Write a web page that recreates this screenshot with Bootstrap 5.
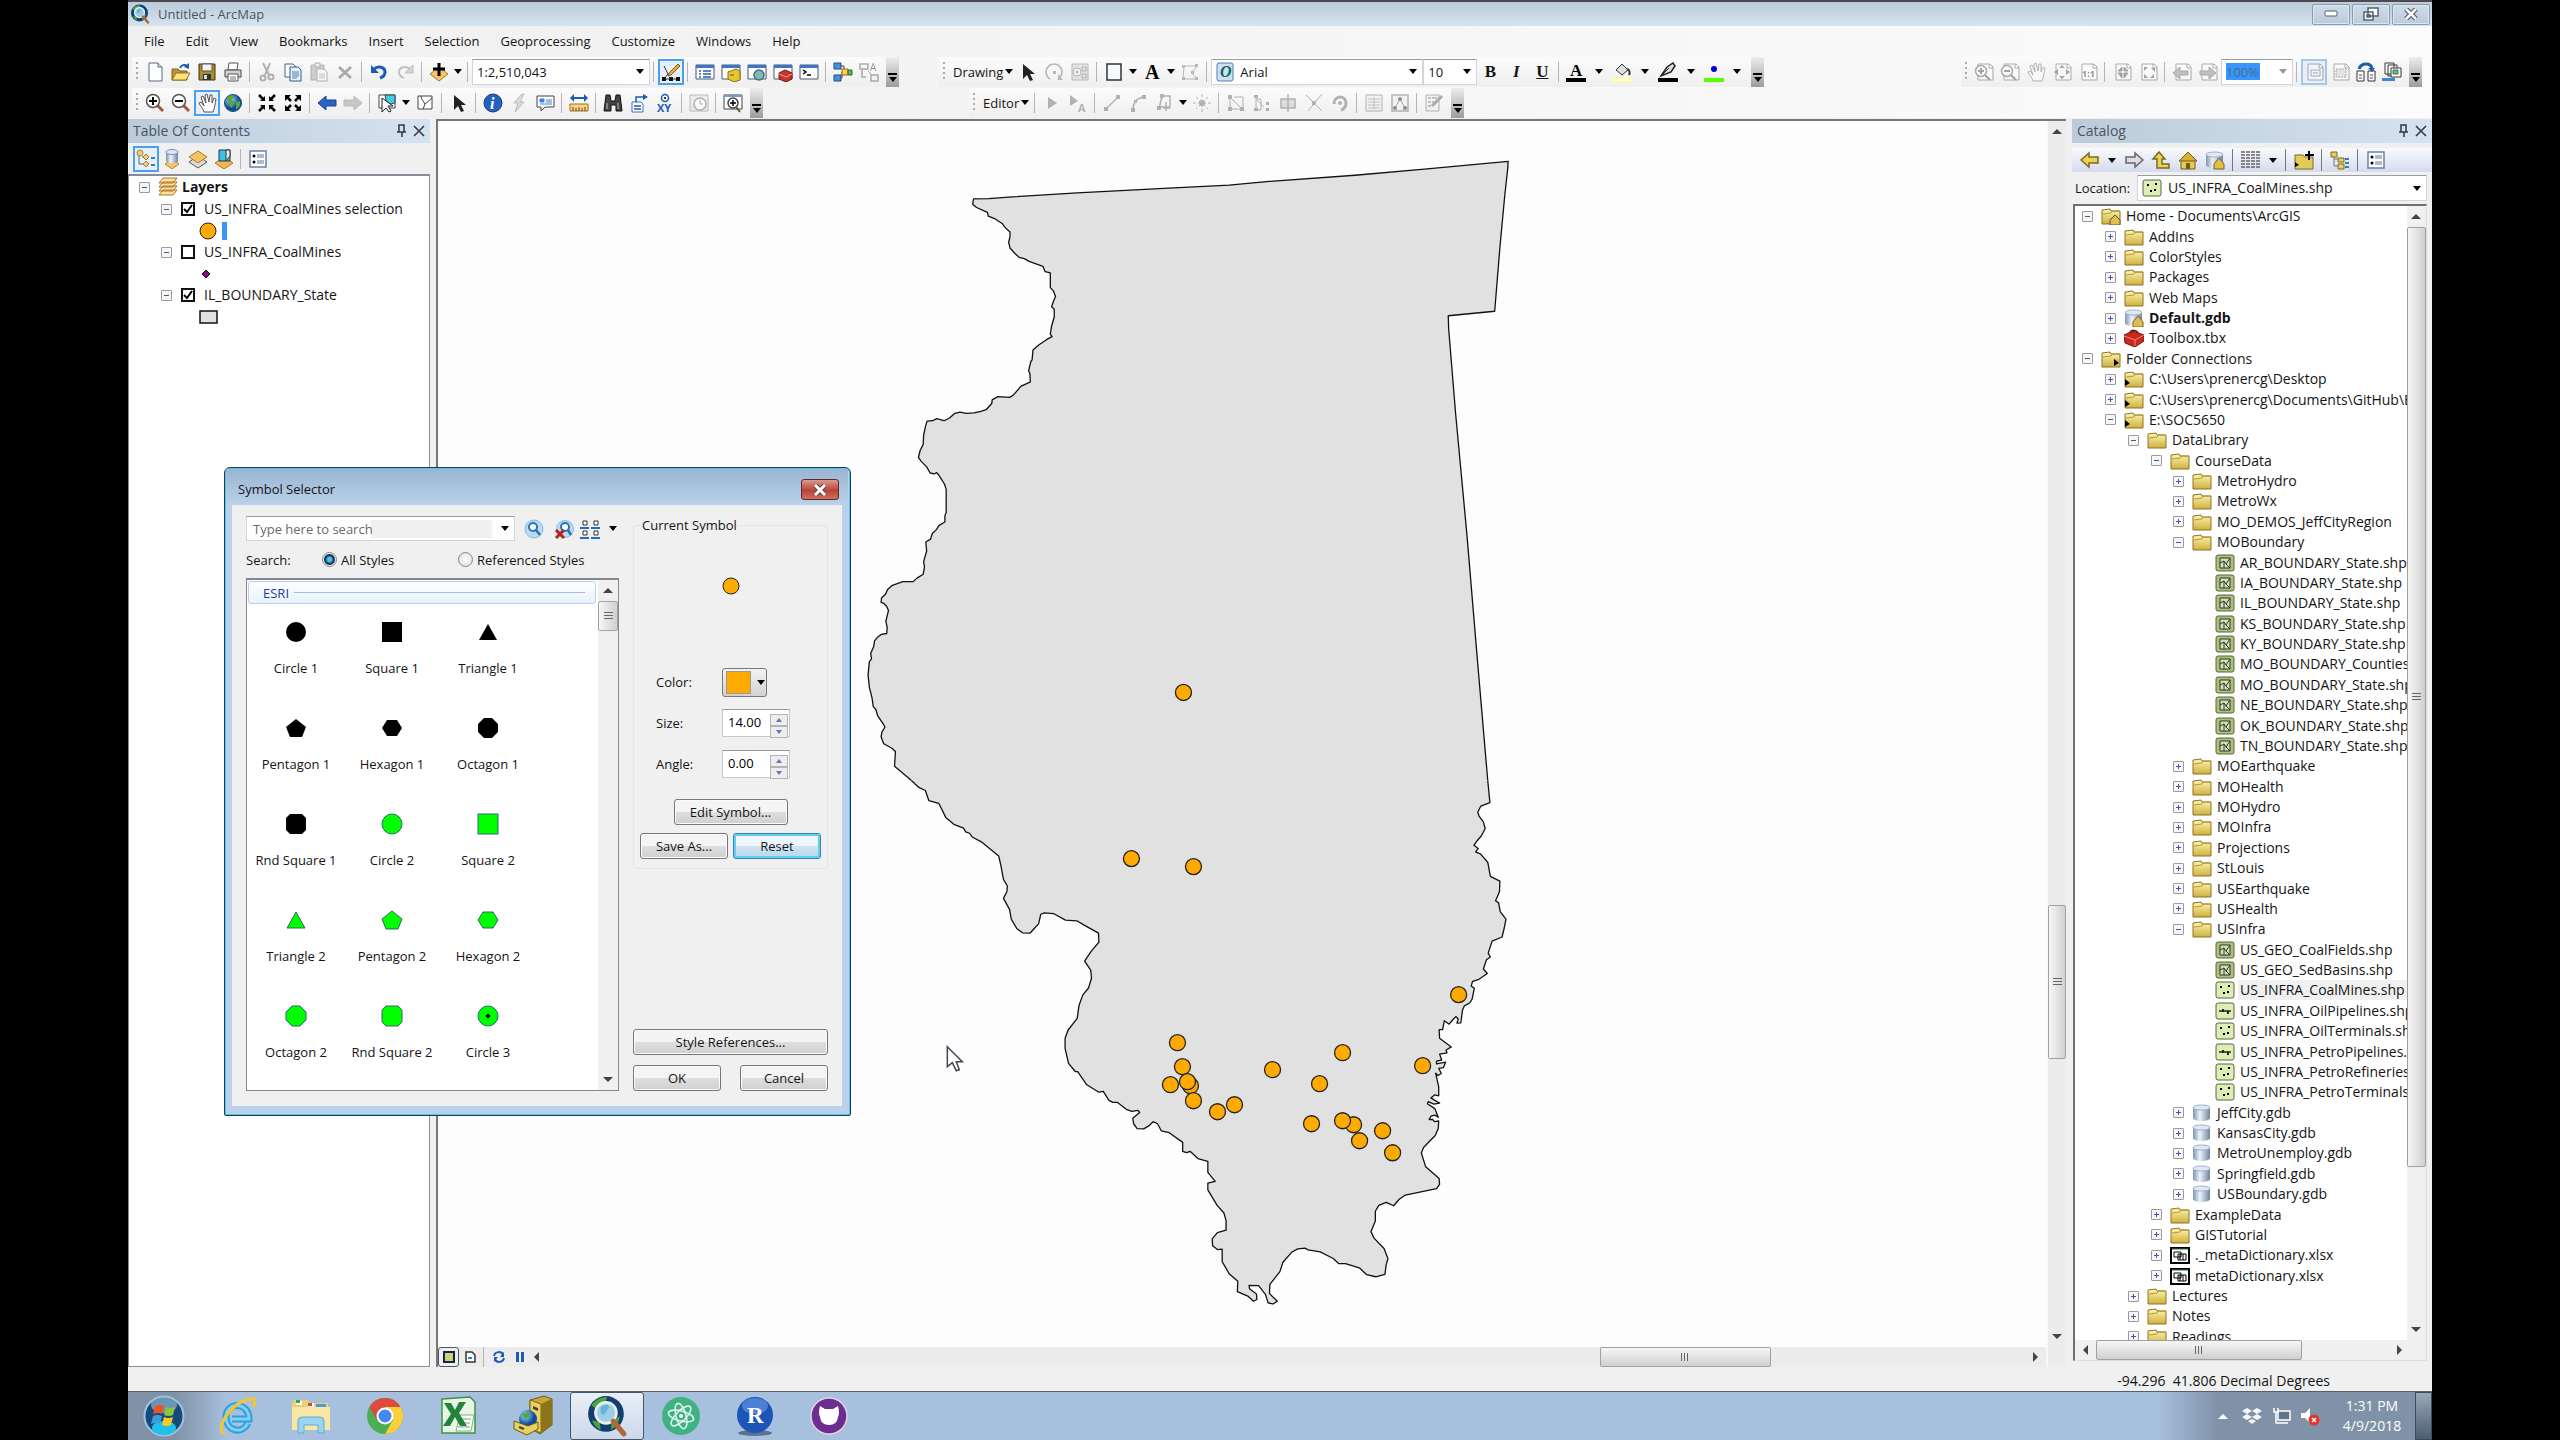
<!DOCTYPE html>
<html lang="en">
<head>
<meta charset="utf-8">
<meta name="viewport" content="width=device-width, initial-scale=1">
<title>Untitled - ArcMap</title>
<link href="https://cdn.jsdelivr.net/npm/bootstrap@5.3.0/dist/css/bootstrap.min.css" rel="stylesheet">
<style>
body{background:#000;font-family:"Open Sans","Noto Sans",sans-serif;font-size:13px;line-height:20px;color:#141414}
button{font:inherit;color:inherit;padding:0;border:0;background:none}
svg{display:block;flex:none}
.desk{height:100vh;margin:0 5vw;background:#f0f0f0;border-top:2px solid #4c4a50}
.titlebar{height:24px;background:linear-gradient(#bccad9,#d6e4f1);padding-left:2px;color:#4c545e}
.titlebar svg{width:20px;height:20px}
.titlebar .wbtns{gap:2px;padding-right:2px}
.wbtn{width:38px;height:21px;border:1px solid #8b9bb0;border-radius:2px;background:linear-gradient(#cddae8,#bccbdc);display:grid;place-items:center;box-shadow:inset 0 0 0 1px #dce6f1}
.titlebar .wbtn svg{width:auto;height:auto}
.menus{height:30px;padding:0 16px;gap:21px;background:linear-gradient(90deg,#f0f0f0,#fbfbfb)}
.menus a{color:#141414;text-decoration:none}
.toolrow{height:31px;background:linear-gradient(90deg,#f0f0f0,#fbfbfb)}
.tbar{height:30px;background:linear-gradient(#fbfbfb,#efefef);padding-left:4px}
.tbar::before{content:"";width:2px;height:20px;margin-right:4px;background:repeating-linear-gradient(#aaa 0 2px,transparent 2px 5px)}
.tools{display:contents}
.tool{width:26px;height:26px;display:grid;place-items:center;flex:none}
.tool svg,.ico{width:20px;height:20px}
.tool.on{border:2px solid #4b9ff0;background:#e6effa}
.tool.off svg{filter:grayscale(1);opacity:.42}
.tool.off.on{border-color:#aac6e4}
.vsep{width:1px;height:20px;margin:0 4px 0 3px;background:#b4b4b4;flex:none}
.arr{width:12px;height:24px;display:grid;place-items:center;flex:none}
.arr.wide{width:20px}
.arr::after,.pick::after{content:"";border:4px solid transparent;border-top:5px solid #000;border-bottom:0}
.more{width:13px;height:30px;margin-left:4px;background:linear-gradient(#ededed,#9c9c9c);display:grid;place-items:end center;padding-bottom:5px}
.more::before{content:"";border:4px solid transparent;border-top:5px solid #000;border-bottom:0;grid-area:1/1}
.more::after{content:"";width:9px;height:9px;background:linear-gradient(#000 0 2px,transparent 2px);grid-area:1/1}
.pick{position:relative;display:flex;align-items:center;background:#fff;border:1px solid #d2d4dc;border-top-color:#9a9ca4}
.pick::after{position:absolute;right:5px;pointer-events:none}
.pick select,.pick input{appearance:none;border:0;background:transparent;width:100%;height:24px;padding:0 0 0 4px;outline:0;font:inherit;color:inherit}
.w-scale{width:178px}.w-font{width:212px}.w-size{width:54px}.w-zoom{width:72px}
.pick.w-zoom select{color:#4a6a90;background:linear-gradient(#3796fb,#3796fb) 4px 3px/34px 17px no-repeat;opacity:1}
.w-zoom::after{border-top-color:#999}
.glyph{font-family:"Liberation Serif",serif;font-weight:700;font-size:17px}
.gap-draw{margin-left:40px}.gap-edit{margin-left:206px}.gap-end{margin-right:10px}
.dockhead{height:24px;background:linear-gradient(90deg,#bccbdb,#d5e3f0);color:#4c545e;font-size:14px;padding:0 4px 0 5px}
.toc{width:302px}
.toctools{height:31px;padding-left:5px}
.tocbox{background:#fff;border:1px solid #868c98;border-top-width:2px}
.tocbox ul,.ctree{list-style:none;margin:0;padding:0;font-size:14px}
.root{height:22px;padding-left:10px}
.lname{height:22px;padding-left:32px}
.lsym{height:21px;padding-left:70px}
.exp{width:11px;height:11px;border:1px solid #9a9a9a;border-radius:1px;background:linear-gradient(90deg,#3c5aa8,#3c5aa8) center/5px 1px no-repeat,#f6f6f6;flex:none}
.exp.plus{background:linear-gradient(#3c5aa8,#3c5aa8) center/5px 1px no-repeat,linear-gradient(#3c5aa8,#3c5aa8) center/1px 5px no-repeat,#f6f6f6}
.tick{appearance:none;width:14px;height:14px;margin:0 9px;border:2px solid #111;background:#fff;flex:none}
.tick:checked{background:#fff url("data:image/svg+xml,%3Csvg xmlns='http://www.w3.org/2000/svg' viewBox='0 0 10 10'%3E%3Cpath d='M1 5l3 3 5-7' fill='none' stroke='%23000' stroke-width='2'/%3E%3C/svg%3E") center/10px no-repeat}
.split{width:6px}
.mapwrap{border-left:2px solid #777;border-top:2px solid #777;min-width:0}
.mapcanvas{background:#fdfdfd;min-height:0}
.mapcanvas svg{width:100%;height:100%}
.vbar{width:20px;background:#ececec;border-left:2px solid #f8f8f8;padding:8px 0 28px}
.vtrack{padding-bottom:275px}
.thumb{border:1px solid #a0a0a0;border-radius:2px;background:linear-gradient(90deg,#f6f6f6,#cfd0d2)}
.thumb.h{background:linear-gradient(#f6f6f6,#cfd0d2)}
.vtrack .thumb{height:154px}
.htrack{padding-right:262px}
.htrack .thumb{width:171px}
.lines{width:9px;height:8px;background:repeating-linear-gradient(#666 0 1px,transparent 1px 3px)}
.lines.h{background:repeating-linear-gradient(90deg,#666 0 1px,transparent 1px 3px)}
.tri{width:0;height:0;border:5px solid transparent;flex:none}
.tri.u{border-top:0;border-bottom-color:#444}.tri.d{border-bottom:0;border-top-color:#444}
.tri.l{border-left:0;border-right-color:#444}.tri.r{border-right:0;border-left-color:#444}
.mapfoot{height:20px;background:#ececec;padding-right:8px}
.mapfoot .tool{width:21px;height:20px}.mapfoot .tool svg{width:12px;height:12px}
.mapfoot .tool.on{border:1px solid #555;border-radius:3px}
.catalog{width:360px}
.cattools{height:24px;margin:5px 0 3px;padding-left:4px;background:linear-gradient(#fbfbfe,#d3dbee)}
.cattools .tool{width:27px;height:24px}.cattools .arr{width:17px}.cattools .vsep{margin:0 4px;height:22px;background:#777}
.locrow{height:26px;margin-bottom:3px;padding:0 5px 0 3px}
.locrow .pick{width:290px}
.locrow .pick select{padding-left:6px;font-size:14px}
.catbox{margin:0 5px 6px 1px;border:2px solid #707070;border-right:1px solid #ddd;border-bottom:1px solid #ddd;background:#fff}
.treeview{overflow:hidden;min-width:0}
.ctree{height:calc(100% + 7px);display:flex;flex-direction:column;padding-left:7px}
.ctree li{flex:1 1 0;min-height:0;display:flex;align-items:center;white-space:nowrap}
.ctree svg{width:20px;height:18px;margin:0 3px 0 8px}
.ctree .leaf{margin-left:11px}
.ctree a{color:#141414;text-decoration:none;padding:0 2px;line-height:20px}
.ctree a.cur{background:#f0f0f0}
.ctree .l1{padding-left:23px}.ctree .l2{padding-left:46px}.ctree .l3{padding-left:69px}.ctree .l4{padding-left:91px}.ctree .l5{padding-left:114px}
.catv{width:20px;background:#f0f0f0}
.cath{height:20px;background:#f0f0f0;padding:0 24px 0 8px}
.cath .thumb{width:206px}
.statusbar{height:24px;padding:3px 102px 0 0;font-size:14px}
.taskbar{height:49px;border-top:1px solid #51606f;background:linear-gradient(90deg,#8092a8 0,#8092a8 48px,#a6c0dd 98px,#a6c0dd 2030px,#8092a8 2090px,#8092a8)}
.tapp{width:74px;height:48px;display:grid;place-items:center}
.tapp:first-child{width:72px}
.tapp svg{width:42px;height:42px}
.tapp.live{border:1px solid #45566c;border-radius:3px;background:linear-gradient(#e9eff7,#ccd9ea)}
.tray{gap:9px}
.clock{color:#fff;font-size:14px;text-align:center;width:78px;margin-right:4px}
.showdesk{width:17px;height:48px;border:1px solid #3e4b5c;background:linear-gradient(#9aa7b6,#4c5d73)}
.tray svg{width:20px;height:20px}
/* floating dialog */
.symdlg{position:absolute;left:96px;top:465px;width:627px;border:1px solid #1d3c56;border-radius:6px 6px 2px 2px;background:#b9d1ea;box-shadow:inset 0 0 0 1px #56c4e4;padding:0 8px 9px 7px}
.symdlg header{height:36px;background:linear-gradient(#9ab5d2,#b9d1ea);margin:1px -6px 0;padding:10px 9px 0 12px}
.xbtn{width:38px;height:21px;border:1px solid #5c2a2a;border-radius:3px;background:linear-gradient(#d99a92,#c14a3c 50%,#b4402f 51%,#d07060);display:grid;place-items:center}
.dlgbody{background:#f0f0f0;padding:11px 13px 15px 14px;gap:14px}
.dleft{width:373px}
.searchrow{height:25px}
.searchrow .pick{width:274px;height:25px;margin-right:6px}
.searchrow .pick input{margin:0 22px 0 2px;height:18px;background:linear-gradient(90deg,#fff 122px,#f0f0f0 122px)}
.searchrow input::placeholder{color:#6a6a6a;opacity:1}
.radios{height:37px}
.radios span{width:76px}
.radios label{width:136px}
.rad{appearance:none;width:15px;height:15px;border:1px solid #8a8a8a;border-radius:50%;background:radial-gradient(#fff,#d8d8d8);margin:0 4px 0 0;flex:none}
.rad:checked{background:radial-gradient(circle,#56c0ea 0 2px,#12405e 4px 5px,#f4f4f4 6px)}
.symlist{height:513px;border:2px solid #828790;border-width:2px 1px 1px 1px;background:#fff}
.esri{height:23px;margin:1px;border:1px solid #b4d0f0;border-radius:3px;background:linear-gradient(#fff,#e8f1fc);color:#1e3c9a;padding:0 10px 0 14px;width:348px}
.esri::after{content:"";height:1px;flex:1;margin-left:5px;background:#a9bbdf}
.symgrid{display:grid;grid-template-columns:repeat(3,96px);grid-auto-rows:96px;padding-left:1px}
.symgrid button{display:flex;flex-direction:column;align-items:center;padding-top:12px;white-space:nowrap}
.symgrid svg{width:30px;height:30px;margin-bottom:11px}
.symlist .thumb{height:30px}
.dright{width:195px}
.grp{border:1px solid #dce6ee;border-radius:3px;height:353px;margin-top:0;padding:0 6px}
.grp legend{float:none;width:auto;font-size:13px;line-height:18px;margin:0;padding:0 2px}
.preview{height:104px;margin-bottom:30px}
.frow{padding-left:16px;margin-bottom:13px;height:28px}
.frow label{width:66px}
.colorbtn{width:45px;height:29px;border:1px solid #777;border-radius:3px;background:linear-gradient(#f4f4f4,#d2d2d2);display:flex;align-items:center;padding-left:3px}
.colorbtn i{width:25px;height:23px;background:#ffaa00;border:1px solid #999}
.colorbtn b{border:4px solid transparent;border-top:5px solid #000;border-bottom:0;margin-left:6px}
.spin{width:68px;height:28px;border:1px solid #c8c8c8;border-top-color:#999;background:#fff}
.spin input{border:0;width:47px;height:24px;padding:0 0 0 5px;font:inherit;outline:0}
.spin button{width:18px;height:12px;border:1px solid #b4b4b4;background:#eee;display:grid;place-items:center}
.spin .tri{border-width:3px}.spin .tri.u{border-top:0;border-bottom:4px solid #6078b4}.spin .tri.d{border-bottom:0;border-top:4px solid #6078b4}
.wb{height:26px;border:1px solid #777;border-radius:3px;background:linear-gradient(#f4f4f4 50%,#dedede 51%,#d0d0d0);box-shadow:inset 0 0 0 1px #fafafa}
.wb.hot{border-color:#3c7fb1;box-shadow:inset 0 0 0 2px #5fd0f5;background:linear-gradient(#eef6fb 50%,#cfe4f2 51%,#b8d6ea)}
.w88{width:88px}.w114{width:114px}
.dfoot{gap:10px}
</style>
</head>
<body>
<!-- icon sprite -->
<svg width="0" height="0" class="position-absolute" aria-hidden="true"><defs>
<linearGradient id="gf" x2="0" y2="1"><stop stop-color="#fff6b0"/><stop offset="1" stop-color="#cfb03e"/></linearGradient>
<linearGradient id="gd"><stop stop-color="#7f93ad"/><stop offset=".4" stop-color="#eef4fb"/><stop offset="1" stop-color="#6e83a0"/></linearGradient>
<radialGradient id="gl" cx=".35" cy=".3"><stop stop-color="#9fe0ff"/><stop offset="1" stop-color="#0f4c9c"/></radialGradient>
<symbol id="new" viewBox="0 0 20 20"><path d="M4 1h9l4 4v14H4z" fill="#fff" stroke="#566a84"/><path d="M13 1v4h4" fill="#dde6f2" stroke="#566a84"/></symbol>
<symbol id="open" viewBox="0 0 20 20"><path d="M1 18V7h6l2 2h7v9z" fill="#b89430" stroke="#7c6420"/><path d="M1 18l4-7h14l-4 7z" fill="#ffe37a" stroke="#8d7328"/><path d="M9 6c1-3 5-4 7-2" fill="none" stroke="#1d5cae" stroke-width="2"/><path d="M18 1v6l-5-2z" fill="#1d5cae"/></symbol>
<symbol id="save" viewBox="0 0 20 20"><path d="M2 2h16v16H2z" fill="#a58c2c" stroke="#3b3415"/><path d="M5 2h10v7H5z" fill="#f4f4f4" stroke="#554"/><path d="M6 12h8v6H6z" fill="#333"/><path d="M7 13h3v4H7z" fill="#ddd"/></symbol>
<symbol id="print" viewBox="0 0 20 20"><path d="M6 1h9l-1 7H5z" fill="#fff" stroke="#555"/><path d="M2 8h16v7H2z" fill="#d0d3d8" stroke="#444"/><path d="M5 12h10v7H5z" fill="#fff" stroke="#555"/><path d="M7 15h6M7 17h6" stroke="#777"/></symbol>
<symbol id="cut" viewBox="0 0 20 20"><path d="M6 1l6 12M13 1L8 13" stroke="#555" stroke-width="2"/><circle cx="6" cy="16" r="2.5" fill="none" stroke="#555" stroke-width="2"/><circle cx="14" cy="15" r="2.5" fill="none" stroke="#555" stroke-width="2"/></symbol>
<symbol id="copy" viewBox="0 0 20 20"><path d="M2 2h8l3 3v10H2z" fill="#fff" stroke="#49637f"/><path d="M7 5h8l3 3v11H7z" fill="#eaf1fa" stroke="#2d5890"/><path d="M9 10h7M9 12h7M9 14h7M9 16h5" stroke="#4a79b5"/></symbol>
<symbol id="paste" viewBox="0 0 20 20"><path d="M2 3h13v15H2z" fill="#999" stroke="#555"/><path d="M6 1h5v4H6z" fill="#ddd" stroke="#555"/><path d="M8 7h7l3 3v9H8z" fill="#fff" stroke="#555"/><path d="M10 12h6M10 14h6M10 16h6" stroke="#777"/></symbol>
<symbol id="del" viewBox="0 0 20 20"><path d="M4 5l12 11M16 5L4 16" stroke="#444" stroke-width="3"/></symbol>
<symbol id="undo" viewBox="0 0 20 20"><path d="M4 8c5-5 12-3 12 2 0 3-2 5-5 6" fill="none" stroke="#1c5bb4" stroke-width="3"/><path d="M2 3v8h8z" fill="#1c5bb4"/></symbol>
<symbol id="redo" viewBox="0 0 20 20"><path d="M16 8c-5-5-12-3-12 2 0 3 2 5 5 6" fill="none" stroke="#777" stroke-width="2"/><path d="M18 3v8h-8z" fill="#aaa" stroke="#777"/></symbol>
<symbol id="add" viewBox="0 0 20 20"><path d="M10 5l9 7-9 7-9-7z" fill="#f3c663" stroke="#a37a25"/><path d="M10 1v13M4 7h12" stroke="#000" stroke-width="3"/></symbol>
<symbol id="edt" viewBox="0 0 20 20"><path d="M3 4l4 8-4 5h14" fill="none" stroke="#333"/><path d="M8 11L17 2l2 2-9 9-3 1z" fill="#f0a83c" stroke="#7c5a1e"/><path d="M1 15h4v4H1zM8 15h4v4H8zM15 15h4v4h-4z" fill="#111"/></symbol>
<symbol id="win" viewBox="0 0 20 20"><path d="M1 3h18v14H1z" fill="#fff" stroke="#47566a"/><path d="M1 3h18v3H1z" fill="#3f74c4"/></symbol>
<symbol id="toc" viewBox="0 0 20 20"><use href="#win"/><path d="M4 9h2M8 9h8M4 12h2M8 12h8M4 15h2M8 15h8" stroke="#2a62b2" stroke-width="1.5"/></symbol>
<symbol id="catw" viewBox="0 0 20 20"><use href="#win"/><path d="M7 10l8-3 4 2v9l-6 2-6-3z" fill="#e6c52e" stroke="#86701a"/><path d="M9 13h4" stroke="#554"/></symbol>
<symbol id="srch" viewBox="0 0 20 20"><use href="#win"/><circle cx="12" cy="13" r="5" fill="#86b7b0" stroke="#3c6f86" stroke-width="1.5"/></symbol>
<symbol id="tbx" viewBox="0 0 20 20"><use href="#win"/><path d="M6 11l6-3 7 3v6l-6 3-7-3z" fill="#c5352b" stroke="#6e1812"/><path d="M6 12l7 3 6-3" fill="none" stroke="#f4a29a"/></symbol>
<symbol id="py" viewBox="0 0 20 20"><use href="#win"/><path d="M4 8l3 2-3 2M8 13h4" fill="none" stroke="#000" stroke-width="1.5"/></symbol>
<symbol id="model" viewBox="0 0 20 20"><path d="M5 4h6v6h5M5 16h4v-6" fill="none" stroke="#444"/><path d="M1 1h7v6H1zM1 13h7v6H1z" fill="#4a90d9" stroke="#1c4c86"/><path d="M9 7h6v6H9z" fill="#ffd24a" stroke="#8d6d12"/><path d="M15 8h4v5h-4z" fill="#58b858" stroke="#2c6d2c"/></symbol>
<symbol id="ma" viewBox="0 0 20 20"><path d="M1 2h8v5H1zM3 7v8h4M12 13h7v6h-7z" fill="none" stroke="#444" stroke-width="1.5"/><text x="11" y="9" font-size="10">A</text><path d="M9 9l4 4" stroke="#444"/></symbol>
<symbol id="zin" viewBox="0 0 20 20"><path d="M12 12l6 6" stroke="#9c5a38" stroke-width="3"/><circle cx="8" cy="8" r="6.5" fill="#fff" stroke="#555" stroke-width="1.5"/><path d="M8 4v8M4 8h8" stroke="#000" stroke-width="2"/></symbol>
<symbol id="zout" viewBox="0 0 20 20"><path d="M12 12l6 6" stroke="#9c5a38" stroke-width="3"/><circle cx="8" cy="8" r="6.5" fill="#fff" stroke="#555" stroke-width="1.5"/><path d="M4 8h8" stroke="#000" stroke-width="2"/></symbol>
<symbol id="pan" viewBox="0 0 20 20"><path d="M7 19c-1-4-4-6-5-9l2-1 3 4L4 4l2-1 3 7-1-8 2-1 2 8 1-7h2v8l2-5 2 1c-1 5-1 8-3 13z" fill="#fff" stroke="#555"/></symbol>
<symbol id="globe" viewBox="0 0 20 20"><circle cx="10" cy="10" r="8.5" fill="url(#gl)" stroke="#1a4a7d"/><path d="M4 5c3-3 6-3 7-1l-2 3 2 3-2 5c-3-2-5-6-5-10zM13 9l4-1c1 4-1 7-4 8z" fill="#5aa73a"/></symbol>
<symbol id="fin" viewBox="0 0 20 20"><path d="M2 2l5 5M18 2l-5 5M2 18l5-5M18 18l-5-5" stroke="#000" stroke-width="2.5"/><path d="M8 3v5H3zM12 3v5h5zM8 17v-5H3zM12 17v-5h5z"/></symbol>
<symbol id="fout" viewBox="0 0 20 20"><path d="M3 3l5 5M17 3l-5 5M3 17l5-5M17 17l-5-5" stroke="#000" stroke-width="2.5"/><path d="M2 2h6L2 8zM18 2h-6l6 6zM2 18h6l-6-6zM18 18h-6l6-6z"/></symbol>
<symbol id="back" viewBox="0 0 20 20"><path d="M1 10l8-7v4h10v6H9v4z" fill="#2c64c4" stroke="#1b438c"/></symbol>
<symbol id="fwd" viewBox="0 0 20 20"><path d="M19 10l-8-7v4H1v6h10v4z" fill="#888" stroke="#666"/></symbol>
<symbol id="sel" viewBox="0 0 20 20"><path d="M2 2h16v13H2z" fill="#fff" stroke="#444"/><path d="M8 2h10v8l-8 2z" fill="#43cbe8" stroke="#444"/><path d="M5 5v14l4-4 3 4 2-1-3-5h5z" fill="#fff" stroke="#222"/></symbol>
<symbol id="clr" viewBox="0 0 20 20"><path d="M3 3h14v13H3z" fill="#fff" stroke="#444"/><path d="M6 3c0 4 3 5 4 8l-2 5M17 5l-7 6" fill="none" stroke="#444"/></symbol>
<symbol id="ptr" viewBox="0 0 20 20"><path d="M5 2v15l4-4 3 6 3-1-3-6h5z" fill="#222"/></symbol>
<symbol id="info" viewBox="0 0 20 20"><circle cx="10" cy="10" r="9" fill="#2460bd" stroke="#173d7c"/><text x="7" y="16" font-family="Liberation Serif" font-weight="700" font-style="italic" font-size="16" fill="#fff">i</text></symbol>
<symbol id="bolt" viewBox="0 0 20 20"><path d="M13 1L5 10h4l-3 9 9-10h-4l4-8z" fill="#bbb" stroke="#666"/></symbol>
<symbol id="html" viewBox="0 0 20 20"><path d="M2 3h17v11h-9l-4 4v-4H2z" fill="#fff" stroke="#444"/><path d="M5 6h4v3H5zM11 7h6M11 9h6M5 11h12" fill="#3a86d8" stroke="#3a86d8"/></symbol>
<symbol id="meas" viewBox="0 0 20 20"><path d="M1 5l4-4v3h10V1l4 4-4 4V6H5v3z" fill="#1c5bb4"/><path d="M1 11h18v7H1z" fill="#ffd27a" stroke="#9c7522"/><path d="M4 18v-4M7 18v-3M10 18v-4M13 18v-3M16 18v-4" stroke="#644"/></symbol>
<symbol id="find" viewBox="0 0 20 20"><path d="M3 2h4l1 6h4l1-6h4l2 16h-6v-6H8v6H1z" fill="#444" stroke="#111"/><path d="M4 10v6M15 10v6" stroke="#bbb"/></symbol>
<symbol id="route" viewBox="0 0 20 20"><path d="M3 9h9l2 2v8H3z" fill="#fff" stroke="#3a70b5"/><path d="M5 13h7M5 16h7M7 9V4h8" stroke="#1c5bb4" fill="none" stroke-width="1.5"/><path d="M14 1l5 3-5 3z" fill="#1c5bb4"/></symbol>
<symbol id="xy" viewBox="0 0 20 20"><circle cx="10" cy="5" r="3.5" fill="#fff" stroke="#1c5bb4" stroke-width="1.5"/><circle cx="10" cy="5" r="1"/><text x="2" y="19" font-size="11" font-weight="700" fill="#1c5bb4">XY</text></symbol>
<symbol id="time" viewBox="0 0 20 20"><path d="M1 2h18v16H1z" fill="#ddd" stroke="#666"/><circle cx="11" cy="11" r="6" fill="#fff" stroke="#555" stroke-width="1.5"/><path d="M11 7v4h3" fill="none" stroke="#555"/></symbol>
<symbol id="viewer" viewBox="0 0 20 20"><path d="M1 2h18v14H1z" fill="#fff" stroke="#444"/><path d="M1 2h18v2H1z" fill="#7a9cc9"/><path d="M13 14l4 5" stroke="#553" stroke-width="2"/><circle cx="10" cy="10" r="5" fill="#fff" stroke="#444" stroke-width="1.5"/><path d="M10 7v6M7 10h6" stroke="#000" stroke-width="1.5"/></symbol>
<symbol id="rot" viewBox="0 0 20 20"><path d="M6 17A8 8 0 1 1 14 17" fill="none" stroke="#666" stroke-width="1.5"/><path d="M14 12v6h5M9 9h3v3H9z" fill="#666"/></symbol>
<symbol id="zsel" viewBox="0 0 20 20"><path d="M2 2h16v16H2z" fill="#ccc" stroke="#666"/><circle cx="7" cy="10" r="4" fill="#fff" stroke="#555"/><path d="M7 8v4M5 10h4M12 5h4v4h-4zM12 12h4v4h-4z" stroke="#555" fill="none"/></symbol>
<symbol id="rect" viewBox="0 0 20 20"><path d="M3 2h14v16H3z" fill="#f6f9fd" stroke="#333" stroke-width="1.5"/></symbol>
<symbol id="ta" viewBox="0 0 20 20"><text x="3" y="17" font-family="Liberation Serif" font-weight="700" font-size="20">A</text></symbol>
<symbol id="poly" viewBox="0 0 20 20"><path d="M4 4h13l-5 7 5 6H3z" fill="none" stroke="#666"/><path d="M2 3h3v3H2zM15 2h3v3h-3zM11 9h3v3h-3zM15 15h3v3h-3zM2 15h3v3H2z" fill="#666"/></symbol>
<symbol id="fa" viewBox="0 0 20 20"><text x="4" y="14" font-family="Liberation Serif" font-weight="700" font-size="17">A</text><path d="M0 16h20v4H0z"/></symbol>
<symbol id="bucket" viewBox="0 0 20 20"><path d="M4 8l6-6 6 6-6 5z" fill="#ddd" stroke="#333"/><path d="M15 7c3 1 3 4 2 6" fill="none" stroke="#333" stroke-width="2"/><path d="M0 16h20v4H0z" fill="#ffffb4"/></symbol>
<symbol id="pen" viewBox="0 0 20 20"><path d="M3 14L9 5l6-4 2 3-4 6z" fill="#ddd" stroke="#222" stroke-width="1.5"/><path d="M3 14l8-8" stroke="#222"/><path d="M0 16h20v4H0z"/></symbol>
<symbol id="mark" viewBox="0 0 20 20"><circle cx="10" cy="7" r="3" fill="#00c"/><path d="M0 16h20v4H0z" fill="#5f0"/></symbol>
<symbol id="ptrs" viewBox="0 0 20 20"><path d="M6 4v12l9-6z" fill="#555"/></symbol>
<symbol id="ptra" viewBox="0 0 20 20"><path d="M2 2v11l8-5z" fill="#555"/><text x="10" y="19" font-size="11" font-weight="700" fill="#555">A</text></symbol>
<symbol id="seg" viewBox="0 0 20 20"><path d="M4 16L16 4" stroke="#555" stroke-width="1.5"/><path d="M2 14h4v4H2zM14 2h4v4h-4z" fill="#555"/></symbol>
<symbol id="arc" viewBox="0 0 20 20"><path d="M5 17C5 9 9 5 16 4" fill="none" stroke="#555" stroke-width="1.5"/><path d="M3 15h4v4H3zM14 2h4v4h-4zM6 7h3v3H6z" fill="#555"/></symbol>
<symbol id="trace" viewBox="0 0 20 20"><path d="M5 16L8 3h8v11H5M12 9v9M9 15h7" fill="none" stroke="#555" stroke-width="1.5"/><path d="M6 1h4v4H6zM3 13h4v4H3z" fill="#555"/></symbol>
<symbol id="burst" viewBox="0 0 20 20"><path d="M10 1v18M1 10h18M4 4l12 12M16 4L4 16" stroke="#555" stroke-dasharray="3 2"/><circle cx="10" cy="10" r="3" fill="#555"/></symbol>
<symbol id="vert" viewBox="0 0 20 20"><path d="M4 4l12 12H4zM8 4h9v12" fill="none" stroke="#555"/><path d="M2 2h4v4H2zM14 14h4v4h-4zM2 14h4v4H2z" fill="#555"/></symbol>
<symbol id="resh" viewBox="0 0 20 20"><path d="M4 2v15h5V6H4l8 8" fill="none" stroke="#555"/><path d="M2 2h4v3H2zM2 15h4v3H2zM14 9h3v3h-3zM14 15h3v3h-3z" fill="#555"/></symbol>
<symbol id="cutp" viewBox="0 0 20 20"><path d="M3 6h14v9H3zM10 1v18" fill="#bbb" stroke="#555" stroke-width="1.5"/></symbol>
<symbol id="splt" viewBox="0 0 20 20"><path d="M2 2l16 16M18 1L4 18" fill="none" stroke="#555"/><path d="M8 8h4v4H8z" fill="#555"/></symbol>
<symbol id="rot2" viewBox="0 0 20 20"><path d="M4 11c0-9 12-9 12-1 0 3-2 6-5 7" fill="none" stroke="#555" stroke-width="3"/><circle cx="10" cy="10" r="2" fill="#555"/></symbol>
<symbol id="attr" viewBox="0 0 20 20"><path d="M2 2h16v16H2z" fill="#eee" stroke="#555"/><path d="M4 6h12M4 9h12M4 12h12M4 15h12M10 4v12" stroke="#777"/></symbol>
<symbol id="skp" viewBox="0 0 20 20"><path d="M2 2h16v16H2z" fill="#eee" stroke="#555" stroke-width="1.5"/><path d="M5 15l5-9 5 9" fill="none" stroke="#444"/><circle cx="10" cy="6" r="2"/><circle cx="5" cy="15" r="2"/><circle cx="15" cy="15" r="2"/></symbol>
<symbol id="crf" viewBox="0 0 20 20"><path d="M2 2h13v16H2z" fill="#eee" stroke="#555"/><path d="M4 5h3M4 9h3M4 13h3M8 5h5M8 9h3" stroke="#555" stroke-width="1.5"/><path d="M8 13L18 3" stroke="#444" stroke-width="3"/></symbol>
<symbol id="pg" viewBox="0 0 20 20"><path d="M4 2h12l3 3v13H4z" fill="#fff" stroke="#444"/><path d="M15 2v4h4" fill="none" stroke="#444"/></symbol>
<symbol id="pzin" viewBox="0 0 20 20"><use href="#pg"/><circle cx="7" cy="9" r="5.5" fill="#fff" stroke="#444" stroke-width="1.5"/><path d="M7 6v6M4 9h6M11 13l5 5" stroke="#333" stroke-width="2"/></symbol>
<symbol id="pzout" viewBox="0 0 20 20"><use href="#pg"/><circle cx="7" cy="9" r="5.5" fill="#fff" stroke="#444" stroke-width="1.5"/><path d="M4 9h6M11 13l5 5" stroke="#333" stroke-width="2"/></symbol>
<symbol id="pwhole" viewBox="0 0 20 20"><use href="#pg"/><path d="M10 3l3 3H7zM10 17l3-3H7zM2 10l4-3v6zM18 10l-4-3v6z" fill="#333"/></symbol>
<symbol id="p11" viewBox="0 0 20 20"><use href="#pg"/><text x="4" y="15" font-size="9" font-weight="700">1:1</text></symbol>
<symbol id="pfin" viewBox="0 0 20 20"><use href="#pg"/><path d="M10 9V5L6 9zM12 9V5l4 4zM10 11v5l-4-5zM12 11v5l4-5z" stroke="#333" fill="#333"/></symbol>
<symbol id="pfout" viewBox="0 0 20 20"><use href="#pg"/><path d="M6 5h4L6 9zM17 6v4l-4-4zM6 16v-4l4 4zM16 16h-4l4-4z" fill="#333"/></symbol>
<symbol id="pback" viewBox="0 0 20 20"><use href="#pg"/><path d="M1 11l7-6v4h8v4H8v4z" fill="#777" stroke="#444"/></symbol>
<symbol id="pfwd" viewBox="0 0 20 20"><use href="#pg"/><path d="M18 11l-7-6v4H2v4h9v4z" fill="#777" stroke="#444"/></symbol>
<symbol id="draft" viewBox="0 0 20 20"><use href="#pg"/><path d="M7 8h9v6H7zM9 11h5" fill="none" stroke="#444"/></symbol>
<symbol id="pfoc" viewBox="0 0 20 20"><use href="#pg"/><path d="M6 7h10v8H6z" fill="#ccc" stroke="#444" stroke-dasharray="2 1"/></symbol>
<symbol id="chg" viewBox="0 0 20 20"><path d="M1 9h7v10H1zM12 9h7v10h-7z" fill="#fff" stroke="#333"/><path d="M3 13h3M3 16h3M14 13h3M14 16h3" stroke="#446"/><path d="M3 7c2-6 11-7 13-1" fill="none" stroke="#1a5fa8" stroke-width="3"/><path d="M12 6h7l-3 4z" fill="#1a5fa8"/></symbol>
<symbol id="ddp" viewBox="0 0 20 20"><path d="M3 1h9v11H3zM6 3h9v11H6z" fill="#fff" stroke="#333"/><path d="M9 6h10v9H9z" fill="#fff" stroke="#333"/><path d="M11 8h5v4h-5z" fill="#7dbb5a" stroke="#376"/><path d="M0 16h13v3H0z" fill="#3c86d8"/></symbol>
<symbol id="lorder" viewBox="0 0 20 20"><path d="M3 5v10h5M6 8h4" fill="none" stroke="#665"/><circle cx="4" cy="4" r="3" fill="#f3c97a" stroke="#a5813a"/><path d="M10 5l3 3-3 3-3-3zM10 12l3 3-3 3-3-3z" fill="#f3c97a" stroke="#a5813a"/><path d="M15 9h4M15 16h4" stroke="#3a7bbf" stroke-width="2"/></symbol>
<symbol id="lsrc" viewBox="0 0 20 20"><path d="M10 10l7 5-7 5-7-5z" fill="#f3c663" stroke="#b58a35"/><path d="M4 3v9c0 3 12 3 12 0V3z" fill="url(#gd)"/><ellipse cx="10" cy="3" rx="6" ry="2.5" fill="#dde8f5" stroke="#7c90ab"/></symbol>
<symbol id="lvis" viewBox="0 0 20 20"><path d="M10 7l9 6-9 6-9-6z" fill="#ddd" stroke="#555"/><path d="M10 2l9 6-9 6-9-6z" fill="#f3c663" stroke="#a37a25"/></symbol>
<symbol id="lsel" viewBox="0 0 20 20"><path d="M10 8l9 6-9 6-9-6z" fill="#f0b75a" stroke="#a37a25"/><path d="M5 1h11v11H5z" fill="#35c5ea" stroke="#333"/><path d="M12 1h4v6l-4 5z" fill="#e8e8e8" stroke="#333"/></symbol>
<symbol id="lopt" viewBox="0 0 20 20"><path d="M2 2h16v16H2z" fill="#fff" stroke="#6a83ad" stroke-width="1.5"/><circle cx="6" cy="7" r="1.5"/><circle cx="6" cy="13" r="1.5"/><path d="M9 6h7M9 8h7M9 12h7M9 14h7" stroke="#678"/></symbol>
<symbol id="layers" viewBox="0 0 20 20"><g fill="#ffdf9a" stroke="#a5752a"><path d="M1 18l4-5h14l-4 5zM1 14l4-5h14l-4 5zM1 10l4-5h14l-4 5zM1 6l4-5h14l-4 5z"/></g></symbol>
<symbol id="fold" viewBox="0 0 20 18"><path d="M1 3l8-1 1 2h9v13H1z" fill="url(#gf)" stroke="#8a7428"/><path d="M2 7l8-1 1-2h8" fill="none" stroke="#b89a3c"/></symbol>
<symbol id="fhome" viewBox="0 0 20 18"><use href="#fold"/><path d="M9 13l5-5 5 5v5H9z" fill="#e0c04a" stroke="#554"/></symbol>
<symbol id="fcon" viewBox="0 0 20 18"><use href="#fold"/><path d="M12 9h6v7h-6z" fill="#d9c05a"/><path d="M13 9v7l5-3z"/></symbol>
<symbol id="flnk" viewBox="0 0 20 18"><use href="#fold"/><path d="M1 9v7l5-3z"/></symbol>
<symbol id="gdb" viewBox="0 0 20 18"><path d="M1 3v11c0 4 17 4 17 0V3z" fill="url(#gd)"/><ellipse cx="9.500" cy="3.500" rx="8.500" ry="2.500" fill="#dfe9f6" stroke="#9fb2ca"/></symbol>
<symbol id="gdbh" viewBox="0 0 20 18"><use href="#gdb"/><path d="M9 13l5-6 5 6v5H9z" fill="#e0c04a" stroke="#776020"/></symbol>
<symbol id="tbox" viewBox="0 0 20 18"><path d="M0 6l9-4 11 4v6l-9 6L1 14z" fill="#c9281f" stroke="#7a1611"/><path d="M0 7l11 4 9-5M11 11v6" stroke="#f08a80" fill="none"/><path d="M6 4c1-4 7-3 8 0" fill="none" stroke="#6e1812" stroke-width="1.500"/></symbol>
<symbol id="shpa" viewBox="0 0 20 18"><rect x="1" y="1" width="18" height="16" rx="2" fill="#a9c17a" stroke="#54693a"/><path d="M5 4h10v10H5z" fill="#d5e3b4" stroke="#333"/><path d="M5 9l4-2 2 3 4-6M9 7v7M11 10l4 4" fill="none" stroke="#333"/></symbol>
<symbol id="shpp" viewBox="0 0 20 18"><rect x="1" y="1" width="18" height="16" rx="2" fill="#ddedb4" stroke="#54693a"/><path d="M5 5h2v2H5zM13 4h2v2h-2zM8 11h2v2H8zM12 10h2v2h-2z"/></symbol>
<symbol id="shpl" viewBox="0 0 20 18"><rect x="1" y="1" width="18" height="16" rx="2" fill="#ddedb4" stroke="#54693a"/><path d="M4 9h12" stroke="#222" stroke-width="1.500"/><path d="M7 7h2v3H7zM12 9h2v3h-2z" fill="#222"/></symbol>
<symbol id="xls" viewBox="0 0 20 18"><path d="M1 2h18v15H1z" fill="#fff" stroke="#000" stroke-width="2"/><path d="M2 3h16" stroke="#297a3a"/><path d="M4 6h7v5H4zM8 8h8v6H8zM10 8v6M13 8v6" fill="#fff" stroke="#000"/></symbol>
<symbol id="cback" viewBox="0 0 20 20"><path d="M1 10l8-7v4h9v6H9v4z" fill="#ead258" stroke="#7c6a1c" stroke-width="1.500"/></symbol>
<symbol id="cfwd" viewBox="0 0 20 20"><path d="M19 10l-8-7v4H2v6h9v4z" fill="#ddd" stroke="#666" stroke-width="1.500"/></symbol>
<symbol id="cup" viewBox="0 0 20 20"><path d="M8 2l6 7h-3v5h7v4H6V9H2z" fill="#ead258" stroke="#7c6a1c" stroke-width="1.500"/></symbol>
<symbol id="chome" viewBox="0 0 20 20"><path d="M3 10v9h14v-9" fill="#e8c94e" stroke="#6e5c18"/><path d="M1 11L10 2l9 9z" fill="#d5b032" stroke="#6e5c18"/><path d="M8 13h4v6H8z" fill="#6e5c18"/></symbol>
<symbol id="ctab" viewBox="0 0 20 20"><path d="M0 2h20M0 5h20M0 8h20M0 11h20M0 14h20M0 17h20" stroke="#666" stroke-width="1.500" stroke-dasharray="4 1"/></symbol>
<symbol id="ccon" viewBox="0 0 20 20"><path d="M1 5h8l2 2h8v12H1z" fill="#e2cb58" stroke="#7c6a1c"/><path d="M1 12v5l4-2z"/><path d="M15 1v9M11 5h9" stroke="#000" stroke-width="2"/></symbol>
<symbol id="ctr" viewBox="0 0 20 20"><path d="M4 5v11h6M4 9h6" fill="none" stroke="#777"/><path d="M1 2h6v5H1zM8 8h6v4H8zM8 14h6v5H8z" fill="#e6cf58" stroke="#7c6a1c"/><path d="M15 9h4M15 13h4M15 17h4" stroke="#3a7bbf" stroke-width="2"/></symbol>
<symbol id="dv" viewBox="0 0 12 12"><path d="M1 1h10v10H1z" fill="#b9d98a" stroke="#223" stroke-width="2"/><path d="M4 9l4-6" stroke="#e8c95a" stroke-width="2"/></symbol>
<symbol id="lv" viewBox="0 0 12 12"><path d="M2 1h6l3 3v7H2z" fill="#fff" stroke="#333" stroke-width="1.500"/><path d="M4 6h4v2H4z" fill="#28c"/></symbol>
<symbol id="rf" viewBox="0 0 12 12"><path d="M1 5c1-5 8-5 9-1M11 7c-1 5-8 5-9 1" fill="none" stroke="#1c5bb4" stroke-width="2"/><path d="M11 1v5H7zM1 11V6h4z" fill="#1c5bb4"/></symbol>
<symbol id="pz" viewBox="0 0 12 12"><path d="M2 1h3v10H2zM7 1h3v10H7z" fill="#1c5bb4"/></symbol>
<symbol id="arcmap" viewBox="0 0 40 40"><circle cx="19" cy="18" r="17" fill="#123e70"/><path d="M5 10c4-6 10-8 15-8l-2 7-8 4zM24 26l8-6c0 6-4 11-8 13zM6 24l7 2 1 7c-4-1-7-5-8-9z" fill="#4ca43a"/><circle cx="19" cy="17" r="10" fill="#b9e6f8" fill-opacity=".85" stroke="#e8eef4" stroke-width="2.500"/><path d="M14 12c3-4 8-3 8 0l-5 7-3-2z" fill="#5fb7e0"/><path d="M26 25l10 12" stroke="#b0683a" stroke-width="5" stroke-linecap="round"/></symbol>
</defs></svg>

<div class="desk d-flex flex-column position-relative overflow-hidden">
  <header class="titlebar d-flex align-items-center gap-2">
    <svg><use href="#arcmap"/></svg><span class="flex-fill">Untitled - ArcMap</span>
    <div class="d-flex wbtns">
      <button class="wbtn" aria-label="Minimize"><svg width="14" height="8"><rect x="1" y="1" width="12" height="5" rx="1" fill="#fff" stroke="#56606c"/></svg></button>
      <button class="wbtn" aria-label="Restore"><svg width="16" height="14"><path d="M5 1h10v8H5zM1 5h9v8H1zM4 8h3v2H4z" fill="#fff" stroke="#56606c" stroke-width="1.500"/></svg></button>
      <button class="wbtn" aria-label="Close"><svg width="14" height="12"><path d="M2 1l10 10M12 1L2 11" stroke="#56606c" stroke-width="5"/><path d="M2 1l10 10M12 1L2 11" stroke="#fff" stroke-width="2.500"/></svg></button>
    </div>
  </header>
  <nav class="menus d-flex align-items-center">
    <a href="#">File</a><a href="#">Edit</a><a href="#">View</a><a href="#">Bookmarks</a><a href="#">Insert</a><a href="#">Selection</a><a href="#">Geoprocessing</a><a href="#">Customize</a><a href="#">Windows</a><a href="#">Help</a>
  </nav>
  <div class="toolrow d-flex align-items-center">
    <div class="tbar d-flex align-items-center ms-1">
      <span class="tools" data-tools="new open save print | cut~ copy paste~ del~ | undo redo~ | add v |"></span>
      <div class="pick w-scale"><select aria-label="Map scale"><option>1:2,510,043</option></select></div>
      <span class="tools" data-tools="| edt! | toc catw srch tbx py | model ma~ ;"></span>
    </div>
    <div class="tbar gap-draw d-flex align-items-center">
      <button class="ps-1">Drawing</button>
      <span class="tools" data-tools="v ptr rot~ zsel~ | rect v ta v poly~ |"></span>
      <div class="pick w-font"><svg class="ico ms-1"><rect x="1" y="1" width="16" height="18" rx="2" fill="#cfe0f4" stroke="#4d7cba"/><text x="4" y="15" font-family="Liberation Serif" font-style="italic" font-weight="700" font-size="16" fill="#0a6a50">O</text></svg><select aria-label="Font"><option>Arial</option></select></div>
      <div class="pick w-size"><select aria-label="Font size"><option>10</option></select></div>
      <button class="tool glyph">B</button><button class="tool glyph fst-italic">I</button><button class="tool glyph text-decoration-underline">U</button>
      <span class="tools" data-tools="| fa v+ bucket v+ pen v+ mark v+ ;"></span>
    </div>
    <div class="tbar d-flex align-items-center ms-auto gap-end">
      <span class="tools" data-tools="pzin~ pzout~ pan~ pwhole~ p11~ | pfin~ pfout~ | pback~ pfwd~"></span>
      <div class="pick w-zoom"><select aria-label="Page zoom" disabled><option>100%</option></select></div>
      <span class="tools" data-tools="| draft~! pfoc~ chg ddp ;"></span>
    </div>
  </div>
  <div class="toolrow d-flex align-items-center mb-0 pb-0">
    <div class="tbar d-flex align-items-center ms-1">
      <span class="tools" data-tools="zin zout pan! globe | fin fout | back fwd~ | sel v clr | ptr | info bolt~ html | meas | find route xy | time~ | viewer ;"></span>
    </div>
    <div class="tbar gap-edit d-flex align-items-center">
      <button class="ps-1">Editor</button>
      <span class="tools" data-tools="v | ptrs~ ptra~ | seg~ arc~ trace~ v burst~ | vert~ resh~ cutp~ splt~ rot2~ | attr~ skp~ | crf~ ;"></span>
    </div>
  </div>

  <main class="d-flex flex-fill pt-0" style="min-height:0;margin-top:1px">
    <section class="toc d-flex flex-column">
      <div class="dockhead d-flex align-items-center justify-content-between"><span>Table Of Contents</span>
        <svg width="32" height="14"><path d="M3 8h9M5 8V1h5v7M8 8v5M20 2l10 10M30 2L20 12" fill="none" stroke="#334" stroke-width="1.500"/></svg></div>
      <div class="toctools d-flex align-items-center"><span class="tools" data-tools="lorder! lsrc lvis lsel | lopt"></span></div>
      <div class="tocbox flex-fill">
        <ul>
          <li><div class="root d-flex align-items-center fw-bold"><button class="exp" aria-label="Collapse"></button><svg class="ico ms-2 me-1"><use href="#layers"/></svg><span>Layers</span></div></li>
          <li><div class="lname d-flex align-items-center"><button class="exp" aria-label="Collapse"></button><input class="tick" type="checkbox" id="c1" checked><label for="c1">US_INFRA_CoalMines selection</label></div>
            <div class="lsym d-flex align-items-center"><svg width="30" height="20"><circle cx="9" cy="10" r="8" fill="#fa0" stroke="#222"/><path d="M23 1h5v18h-5z" fill="#3796fb"/></svg></div></li>
          <li><div class="lname d-flex align-items-center"><button class="exp" aria-label="Collapse"></button><input class="tick" type="checkbox" id="c2"><label for="c2">US_INFRA_CoalMines</label></div>
            <div class="lsym d-flex align-items-center"><svg width="18" height="18"><path d="M7 5l4 4-4 4-4-4z" fill="#8a0a8a" stroke="#111"/></svg></div></li>
          <li><div class="lname d-flex align-items-center"><button class="exp" aria-label="Collapse"></button><input class="tick" type="checkbox" id="c3" checked><label for="c3">IL_BOUNDARY_State</label></div>
            <div class="lsym d-flex align-items-center"><svg width="20" height="16"><path d="M1 2h17v12H1z" fill="#e1e1e1" stroke="#111" stroke-width="1.500"/></svg></div></li>
        </ul>
      </div>
    </section>
    <div class="split"></div>

    <section class="d-flex flex-fill mapwrap">
      <div class="d-flex flex-column flex-fill" style="min-width:0">
        <div class="mapcanvas flex-fill">
          <svg viewBox="438 121 1607 1225" role="img" aria-label="Illinois with coal mines">
            <g fill="#e1e1e1" stroke="#111" stroke-width="1.300" stroke-linejoin="round">
              <path vector-effect="non-scaling-stroke" transform="translate(860 140) scale(.433673 .408163)" d="M118 1568L90 1543 79 1533 81 1497 73 1489 54 1478 48 1461 50 1449 57 1437 52 1428 40 1409 36 1394 30 1387 27 1365 21 1340 18 1310 21 1277 26 1270 24 1257 31 1240 33 1226 39 1218 49 1210 61 1208 62 1193 59 1178 62 1165 65 1152 61 1142 54 1134 48 1132 49 1121 58 1112 63 1100 74 1090 98 1081 122 1081 130 1073 145 1063 148 1045 146 1032 153 1006 151 984 162 977 166 963 176 953 181 944 195 935 195 920 198 912 198 855 194 842 181 820 176 814 171 817 161 815 153 800 140 786 134 777 138 760 145 745 146 723 150 702 154 688 167 687 176 682 193 687 205 681 218 669 230 666 244 669 262 668 278 664 290 660 303 645 304 636 317 628 344 630 352 625 370 603 392 592 391 572 388 565 393 542 396 538 398 514 412 501 430 488 442 481 438 475 441 455 447 433 447 414 441 408 445 395 450 383 445 369 438 361 438 325 426 322 421 309 389 297 378 290 366 287 356 277 345 264 342 250 345 237 345 225 333 213 327 204 311 193 295 186 293 177 268 165 259 157 261 144 296 143 350 139 500 129 700 118 850 110 930 102 1140 86 1300 71 1493 52 1492 70 1485 138 1474 263 1462 419 1355 430 1356 463 1372 670 1398 966 1423 1283 1446 1568"/>
              <path vector-effect="non-scaling-stroke" transform="translate(860 780) scale(.433673 .344388)" d="M118 0L135 20 150 29 158 58 181 66 197 107 217 128 238 138 243 149 252 153 258 164 279 178 319 219 324 246 330 287 339 306 338 322 330 342 344 374 348 402 361 430 374 442 391 443 402 428 411 416 416 388 424 384 445 386 473 405 499 407 515 419 549 443 550 469 532 496 517 524 531 550 533 573 526 602 513 622 504 653 500 690 479 724 472 748 472 777 480 821 496 845 501 845 522 883 549 904 560 902 573 928 582 934 593 934 613 954 626 960 640 957 644 963 628 980 630 996 638 1010 653 1011 664 1003 675 990 685 996 694 1017 712 1022 743 1050 743 1076 752 1080 760 1076 778 1097 801 1105 801 1137 818 1163 801 1168 801 1188 822 1232 838 1255 843 1277 843 1305 823 1312 811 1330 812 1350 823 1361 834 1360 834 1396 850 1431 870 1453 869 1483 893 1496 906 1511 914 1506 913 1490 897 1475 896 1465 918 1466 934 1492 940 1516 951 1519 961 1511 943 1489 944 1462 967 1425 974 1398 995 1368 1008 1359 1025 1357 1032 1362 1060 1368 1090 1387 1103 1402 1118 1402 1150 1414 1167 1434 1188 1440 1209 1433 1212 1405 1216 1387 1207 1358 1184 1328 1177 1309 1187 1278 1187 1250 1195 1233 1212 1224 1229 1234 1242 1215 1256 1203 1328 1184 1335 1172 1334 1155 1303 1121 1293 1081 1298 1065 1325 1030 1332 1010 1333 988 1324 990 1318 983 1311 984 1315 974 1324 971 1332 977 1324 952 1307 938 1309 932 1322 939 1335 936 1325 929 1315 921 1324 912 1333 915 1333 889 1326 849 1331 856 1339 850 1333 835 1344 833 1349 817 1328 822 1328 814 1340 811 1335 794 1352 790 1350 782 1362 773 1335 748 1334 723 1342 723 1346 697 1357 707 1367 692 1373 685 1378 692 1375 704 1384 703 1388 665 1392 654 1405 645 1410 634 1415 603 1408 596 1411 583 1424 578 1445 560 1436 547 1443 520 1452 512 1447 501 1456 466 1479 454 1484 428 1488 402 1475 381 1471 355 1464 349 1473 323 1474 292 1452 278 1446 237 1429 213 1418 207 1424 197 1414 188 1422 174 1431 161 1440 140 1436 120 1426 103 1423 92 1430 74 1451 64 1446 0"/>
              <path d="M913 777h572v6H915z" stroke="none"/>
            </g>
            <g id="mines" fill="#fa0" stroke="#222" stroke-width="1.300"></g>
            <path d="M947 1046v20l5-4 4 8 3-1-3-8h6z" fill="#fff" stroke="#445" stroke-width="1.500"/>
          </svg>
        </div>
        <div class="mapfoot d-flex align-items-center"><span class="tools" data-tools="dv! lv | rf pz"></span>
          <i class="tri l ms-1"></i>
          <div class="htrack d-flex flex-fill h-100 justify-content-end"><div class="thumb h d-grid justify-content-center align-content-center"><i class="lines h"></i></div></div>
          <i class="tri r"></i></div>
      </div>
      <div class="vbar d-flex flex-column align-items-center">
        <i class="tri u"></i>
        <div class="vtrack flex-fill d-flex flex-column justify-content-end w-100"><div class="thumb d-grid justify-content-center align-content-center"><i class="lines"></i></div></div>
        <i class="tri d"></i></div>
    </section>
    <div class="split"></div>

    <section class="catalog d-flex flex-column">
      <div class="dockhead d-flex align-items-center justify-content-between"><span>Catalog</span>
        <svg width="32" height="14"><path d="M3 8h9M5 8V1h5v7M8 8v5M20 2l10 10M30 2L20 12" fill="none" stroke="#334" stroke-width="1.500"/></svg></div>
      <div class="cattools d-flex align-items-center"><span class="tools" data-tools="cback v cfwd cup chome gdbh | ctab v | ccon | ctr | lopt"></span></div>
      <div class="locrow d-flex align-items-center justify-content-between"><label for="loc">Location:</label>
        <div class="pick"><svg class="ico ms-1"><use href="#shpp"/></svg><select id="loc"><option>US_INFRA_CoalMines.shp</option></select></div></div>
      <div class="catbox flex-fill d-flex flex-column" style="min-height:0">
        <div class="d-flex flex-fill" style="min-height:0">
          <div class="treeview flex-fill"><ul class="ctree" id="tree"></ul></div>
          <div class="catv d-flex flex-column align-items-center pt-2 pb-2"><i class="tri u mb-2"></i><div class="thumb w-100 d-grid" style="flex:0 1 940px;place-items:center"><i class="lines"></i></div><i class="tri d mt-auto"></i></div>
        </div>
        <div class="cath d-flex align-items-center"><i class="tri l"></i><div class="flex-fill h-100 ps-2"><div class="thumb h h-100 d-grid justify-content-center align-content-center"><i class="lines h"></i></div></div><i class="tri r"></i></div>
      </div>
    </section>
  </main>

  <footer class="statusbar d-flex align-items-center justify-content-end">-94.296&nbsp; 41.806 Decimal Degrees</footer>

  <div class="taskbar d-flex align-items-center">
    <button class="tapp" aria-label="Start"><svg viewBox="0 0 42 42"><circle cx="21" cy="21" r="19.500" fill="#164a78" stroke="#9cc4e2" stroke-width="2"/><ellipse cx="21" cy="33" rx="12" ry="7" fill="#1fc0ee"/><ellipse cx="21" cy="10" rx="13" ry="8" fill="#a9c6dd" opacity=".6"/><path d="M12 11q5-2 9 0l-2 8q-4-2-9 0z" fill="#ea5425"/><path d="M23 12q4 2 9 0l-2 8q-4 2-9 0z" fill="#8cc63f"/><path d="M10 21q4-2 9 0l-2 8q-4-2-9 0z" fill="#3d9be0"/><path d="M21 22q4 2 9 0l-2 8q-4 2-9 0z" fill="#fdc820"/></svg></button>
    <button class="tapp" aria-label="Internet Explorer"><svg viewBox="0 0 42 42"><path d="M32 28c-6 12-22 8-22-6 0-15 23-16 23 2H16" fill="none" stroke="#2f9fde" stroke-width="7"/><path d="M32 28c-6 12-22 8-22-6 0-15 23-16 23 2H16" fill="none" stroke="#7ed0f6" stroke-width="3"/><path d="M9 38C-2 38 12 8 34 4c6-1 6 4 3 8" fill="none" stroke="#f5c52c" stroke-width="3"/></svg></button>
    <button class="tapp" aria-label="File Explorer"><svg viewBox="0 0 42 42"><path d="M2 8l2-3h14l2 3h18v26H2z" fill="#e8cf7c"/><path d="M6 6h6v4H6zM18 8h6v4h-6z" fill="#fff"/><path d="M6 5h4v3H6z" fill="#2eb135"/><path d="M18 8h4v3h-4z" fill="#d8432c"/><path d="M26 9h10v3H26z" fill="#4a9ae0"/><path d="M2 12h38v23H2z" fill="#f8e6a4"/><path d="M8 38V26q0-4 4-4h18q4 0 4 4v12h-6v-8H14v8z" fill="#9bd3f0" stroke="#5cabd8"/></svg></button>
    <button class="tapp" aria-label="Chrome"><svg viewBox="0 0 42 42"><circle cx="21" cy="21" r="18" fill="#4cae50"/><path d="M21 21L5.400 12A18 18 0 0 1 36.600 12z" fill="#dd4b3e"/><path d="M21 12h15.600A18 18 0 0 1 21 39l8-14z" fill="#fdd03b"/><path d="M5.400 12l8 13.500L21 12z" fill="#dd4b3e"/><circle cx="21" cy="21" r="8.500" fill="#fff"/><circle cx="21" cy="21" r="6.500" fill="#4587f0"/></svg></button>
    <button class="tapp" aria-label="Excel"><svg viewBox="0 0 42 42"><path d="M4 4l28-2 5 5v31H4z" fill="#e8f4e6" stroke="#3d9443" stroke-width="1.500"/><path d="M22 20h14l-3 16H18z" fill="#fff" stroke="#7ab27a"/><path d="M21 24h12M20 28h12M20 32h12" stroke="#6aa86a"/><path d="M6 8h7l4 7 4-8h7l-7 11 8 13h-7l-5-9-5 9H5l8-12z" fill="#23833a"/></svg></button>
    <button class="tapp" aria-label="ArcCatalog"><svg viewBox="0 0 42 42"><path d="M18 5l14-4 8 3v26l-12 9-10-6z" fill="#c8a832" stroke="#6e5a14"/><path d="M18 5l11 4v29l-11-5z" fill="#e9d062" stroke="#7c661a"/><path d="M29 9l11-5v26l-11 8z" fill="#8e7418"/><path d="M21 11l5 2v3l-5-2z" fill="#443"/><circle cx="16" cy="24" r="9" fill="url(#gl)"/><path d="M10 19l6-2 2 4-5 3z" fill="#58a63c"/><path d="M2 26l14 5 10-4v7l-11 6-13-6z" fill="#e9d062" stroke="#6e5a14"/><path d="M7 32l5 2" stroke="#443" stroke-width="2"/></svg></button>
    <button class="tapp live" aria-label="ArcMap"><svg><use href="#arcmap"/></svg></button>
    <button class="tapp" aria-label="Atom"><svg viewBox="0 0 42 42"><circle cx="21" cy="21" r="19" fill="#3fb283"/><g fill="none" stroke="#e4f6ee" stroke-width="1.500"><ellipse cx="21" cy="21" rx="13" ry="5" transform="rotate(15 21 21)"/><ellipse cx="21" cy="21" rx="13" ry="5" transform="rotate(75 21 21)"/><ellipse cx="21" cy="21" rx="13" ry="5" transform="rotate(135 21 21)"/></g><circle cx="21" cy="21" r="2" fill="#fff"/></svg></button>
    <button class="tapp" aria-label="R"><svg viewBox="0 0 42 42"><ellipse cx="21" cy="38" rx="17" ry="3" fill="#5a7290"/><circle cx="21" cy="20" r="18" fill="#1c54b8"/><ellipse cx="21" cy="11" rx="13" ry="8" fill="#6c9fe6" opacity=".6"/><text x="13" y="28" font-family="Liberation Serif" font-weight="700" font-size="23" fill="#fff">R</text></svg></button>
    <button class="tapp" aria-label="GitHub Desktop"><svg viewBox="0 0 42 42"><circle cx="21" cy="21" r="18" fill="#6c2f8e" stroke="#e2d2ea" stroke-width="1.500"/><path d="M12 11l5 3h8l5-3q2 7 0 11-1 8-9 8t-9-8q-2-4 0-11z" fill="#fff"/></svg></button>
    <div class="tray d-flex align-items-center ms-auto">
      <svg viewBox="0 0 20 20"><path d="M5 13l5-5 5 5z" fill="#fff"/></svg>
      <svg viewBox="0 0 20 20"><path d="M5 2l5 3-5 3-5-3zM15 2l5 3-5 3-5-3zM5 8l5 3-5 3-5-3zM15 8l5 3-5 3-5-3zM10 13l4 2-4 3-4-3z" fill="#f4f6f9"/></svg>
      <svg viewBox="0 0 20 20"><path d="M7 5h12v9H7z" fill="#60748c" stroke="#fff" stroke-width="1.500"/><path d="M3 2v4h4V2M5 6v11h9M11 17h6" fill="none" stroke="#fff" stroke-width="1.500"/></svg>
      <svg viewBox="0 0 20 20"><path d="M1 7h4l5-5v15l-5-5H1z" fill="#fff"/><circle cx="14" cy="14" r="5.500" fill="#e2342c"/><path d="M12 12l4 4M16 12l-4 4" stroke="#fff" stroke-width="1.500"/></svg>
      <div class="clock ms-1">1:31 PM<br>4/9/2018</div>
    </div>
    <button class="showdesk" aria-label="Show desktop"></button>
  </div>

  <div class="symdlg" role="dialog" aria-label="Symbol Selector">
    <header class="d-flex justify-content-between align-items-start"><span>Symbol Selector</span>
      <button class="xbtn" aria-label="Close"><svg width="14" height="12"><path d="M2 1l10 10M12 1L2 11" stroke="#644" stroke-width="5"/><path d="M2 1l10 10M12 1L2 11" stroke="#fff" stroke-width="3"/></svg></button></header>
    <div class="dlgbody d-flex">
      <div class="dleft">
        <div class="searchrow d-flex align-items-center">
          <div class="pick"><input type="text" placeholder="Type here to search" aria-label="Search symbols"></div>
          <button class="tool" aria-label="Search"><svg viewBox="0 0 20 20"><circle cx="10" cy="10" r="9" fill="#b9dcf5" stroke="#8fb8d8"/><circle cx="9" cy="8" r="4" fill="#fff" stroke="#2a72b5" stroke-width="2"/><path d="M12 11l4 5" stroke="#2a72b5" stroke-width="2.500"/></svg></button>
          <button class="tool ms-1" aria-label="Clear search"><svg viewBox="0 0 20 20"><circle cx="11" cy="10" r="8.500" fill="#b9dcf5" stroke="#8fb8d8"/><circle cx="11" cy="8" r="4" fill="#fff" stroke="#2a72b5" stroke-width="2"/><path d="M14 11l3 5" stroke="#2a72b5" stroke-width="2.500"/><path d="M2 11l8 8M10 11l-8 8" stroke="#b3241c" stroke-width="3"/></svg></button>
          <button class="tool" aria-label="View"><svg viewBox="0 0 20 20"><path d="M3 2h4v4H3zM14 2h4v4h-4zM3 12h4v4H3zM14 12h4v4h-4z" fill="#fff" stroke="#333"/><path d="M0 9h9M11 9h9M0 19h9M11 19h9" stroke="#1c6fc4" stroke-width="2"/></svg></button>
          <button class="arr ms-1" aria-label="View options"></button>
        </div>
        <div class="radios d-flex align-items-center"><span>Search:</span>
          <label class="d-flex align-items-center"><input class="rad" type="radio" name="st" checked>All Styles</label>
          <label class="d-flex align-items-center text-nowrap"><input class="rad" type="radio" name="st">Referenced Styles</label></div>
        <div class="symlist d-flex">
          <div class="flex-fill"><div class="esri d-flex align-items-center">ESRI</div><div class="symgrid" id="syms"></div></div>
          <div class="catv d-flex flex-column align-items-center pt-2 pb-2"><i class="tri u mb-2"></i><div class="thumb w-100 d-grid justify-content-center align-content-center"><i class="lines"></i></div><i class="tri d mt-auto"></i></div>
        </div>
      </div>
      <div class="dright d-flex flex-column">
        <fieldset class="grp"><legend>Current Symbol</legend>
          <div class="preview d-flex align-items-center justify-content-center"><svg width="18" height="18"><circle cx="9" cy="9" r="8" fill="#fa0" stroke="#222"/></svg></div>
          <div class="frow d-flex align-items-center"><label for="col">Color:</label><button class="colorbtn" id="col"><i></i><b></b></button></div>
          <div class="frow d-flex align-items-center"><label for="sz">Size:</label><div class="spin d-flex"><input id="sz" value="14.00"><div class="pt-1"><button aria-label="Up"><i class="tri u"></i></button><button aria-label="Down"><i class="tri d"></i></button></div></div></div>
          <div class="frow d-flex align-items-center"><label for="an">Angle:</label><div class="spin d-flex"><input id="an" value="0.00"><div class="pt-1"><button aria-label="Up"><i class="tri u"></i></button><button aria-label="Down"><i class="tri d"></i></button></div></div></div>
          <div class="text-center pt-2"><button class="wb w114">Edit Symbol...</button></div>
          <div class="d-flex justify-content-between pt-2"><button class="wb w88">Save As...</button><button class="wb w88 hot">Reset</button></div>
        </fieldset>
        <div class="dfoot d-flex flex-column mt-auto">
          <button class="wb w-100">Style References...</button>
          <div class="d-flex justify-content-between"><button class="wb w88">OK</button><button class="wb w88">Cancel</button></div>
        </div>
      </div>
    </div>
  </div>
</div>

<script src="https://cdn.jsdelivr.net/npm/bootstrap@5.3.0/dist/js/bootstrap.bundle.min.js"></script>
<script>
// toolbar spec: name, "~" disabled, "!" pressed, "|" separator, "v" drop-down arrow ("v+" wide), ";" overflow
document.querySelectorAll('[data-tools]').forEach(el => {
  el.innerHTML = el.dataset.tools.trim().split(/\s+/).map(t => {
    if (t === '|') return '<i class="vsep"></i>';
    if (t === 'v' || t === 'v+') return `<button class="arr${t[1] ? ' wide' : ''}" aria-label="More options"></button>`;
    if (t === ';') return '<button class="more" aria-label="Toolbar options"></button>';
    const n = t.replace(/[~!]/g, '');
    return `<button class="tool${t.includes('~') ? ' off' : ''}${t.includes('!') ? ' on' : ''}" aria-label="${n}"><svg><use href="#${n}"/></svg></button>`;
  }).join('');
});

// catalog tree: level, expander (+ - or .), icon, name
const shp = n => `5 . shpa ${n}_BOUNDARY_State.shp`;
const rows = ['0 - fhome Home - Documents\\ArcGIS', '1 + fold AddIns', '1 + fold ColorStyles', '1 + fold Packages', '1 + fold Web Maps', '1 + gdbh *Default.gdb', '1 + tbox Toolbox.tbx',
  '0 - fcon Folder Connections', '1 + flnk C:\\Users\\prenercg\\Desktop', '1 + flnk C:\\Users\\prenercg\\Documents\\GitHub\\E', '1 - flnk E:\\SOC5650', '2 - fold DataLibrary', '3 - fold CourseData',
  '4 + fold MetroHydro', '4 + fold MetroWx', '4 + fold MO_DEMOS_JeffCityRegion', '4 - fold MOBoundary',
  shp('AR'), shp('IA'), shp('IL'), shp('KS'), shp('KY'), '5 . shpa MO_BOUNDARY_Counties', shp('MO'), shp('NE'), shp('OK'), shp('TN'),
  '4 + fold MOEarthquake', '4 + fold MOHealth', '4 + fold MOHydro', '4 + fold MOInfra', '4 + fold Projections', '4 + fold StLouis', '4 + fold USEarthquake', '4 + fold USHealth', '4 - fold USInfra',
  '5 . shpa US_GEO_CoalFields.shp', '5 . shpa US_GEO_SedBasins.shp', '5 . shpp US_INFRA_CoalMines.shp', '5 . shpl US_INFRA_OilPipelines.shp', '5 . shpp US_INFRA_OilTerminals.sh', '5 . shpl US_INFRA_PetroPipelines.s', '5 . shpp US_INFRA_PetroRefineries.', '5 . shpp US_INFRA_PetroTerminals',
  '4 + gdb JeffCity.gdb', '4 + gdb KansasCity.gdb', '4 + gdb MetroUnemploy.gdb', '4 + gdb Springfield.gdb', '4 + gdb USBoundary.gdb',
  '3 + fold ExampleData', '3 + fold GISTutorial', '3 + xls ._metaDictionary.xlsx', '3 + xls metaDictionary.xlsx', '2 + fold Lectures', '2 + fold Notes', '2 + fold Readings'];
document.getElementById('tree').innerHTML = rows.map(r => {
  const [, lv, ex, ic, name] = r.match(/^(\d) (.) (\w+) (.*)$/);
  const bold = name[0] === '*', cur = name === 'US_INFRA_CoalMines.shp';
  return `<li class="l${lv}">${ex === '.' ? '<i class="leaf"></i>' : `<button class="exp${ex === '+' ? ' plus' : ''}" aria-label="Toggle"></button>`}<svg><use href="#${ic}"/></svg><a href="#" class="${bold ? 'fw-bold' : ''}${cur ? 'cur' : ''}">${name.replace('*', '')}</a></li>`;
}).join('');

// mine locations in map units
document.getElementById('mines').innerHTML = [[1183,692],[1131,858],[1193,866],[1458,994],[1177,1042],[1182,1066],[1170,1084],[1190,1085],[1187,1081],[1193,1100],[1217,1111],[1234,1104],[1272,1069],[1319,1083],[1342,1052],[1422,1065],[1311,1123],[1353,1124],[1342,1120],[1359,1140],[1382,1130],[1392,1152]]
  .map(([x, y]) => `<circle cx="${x}" cy="${y}" r="8"/>`).join('');

// symbol palette
const shape = {
  circle: '<circle cx="15" cy="15" r="10"/>', square: '<path d="M5 5h20v20H5z"/>', triangle: '<path d="M15 7l9 16H6z"/>',
  pentagon: '<path d="M15 6l10 8-4 10H9L5 14z"/>', hexagon: '<path d="M10 7h10l5 8-5 8H10l-5-8z"/>', octagon: '<path d="M11 5h8l6 6v8l-6 6h-8l-6-6v-8z"/>',
  rnd: '<path d="M9 5h12l4 4v12l-4 4H9l-4-4V9z"/>', dot: '<circle cx="15" cy="15" r="10"/><circle cx="15" cy="15" r="2" fill="#000"/>'
};
document.getElementById('syms').innerHTML = [['circle','Circle 1'],['square','Square 1'],['triangle','Triangle 1'],['pentagon','Pentagon 1'],['hexagon','Hexagon 1'],['octagon','Octagon 1'],['rnd','Rnd Square 1'],
  ['circle','Circle 2',1],['square','Square 2',1],['triangle','Triangle 2',1],['pentagon','Pentagon 2',1],['hexagon','Hexagon 2',1],['octagon','Octagon 2',1],['rnd','Rnd Square 2',1],['dot','Circle 3',1]]
  .map(([s, n, g]) => `<button><svg viewBox="0 0 30 30" fill="${g ? '#0f0' : '#000'}" stroke="${g ? '#366' : 'none'}">${shape[s]}</svg>${n}</button>`).join('');
</script>
</body>
</html>
